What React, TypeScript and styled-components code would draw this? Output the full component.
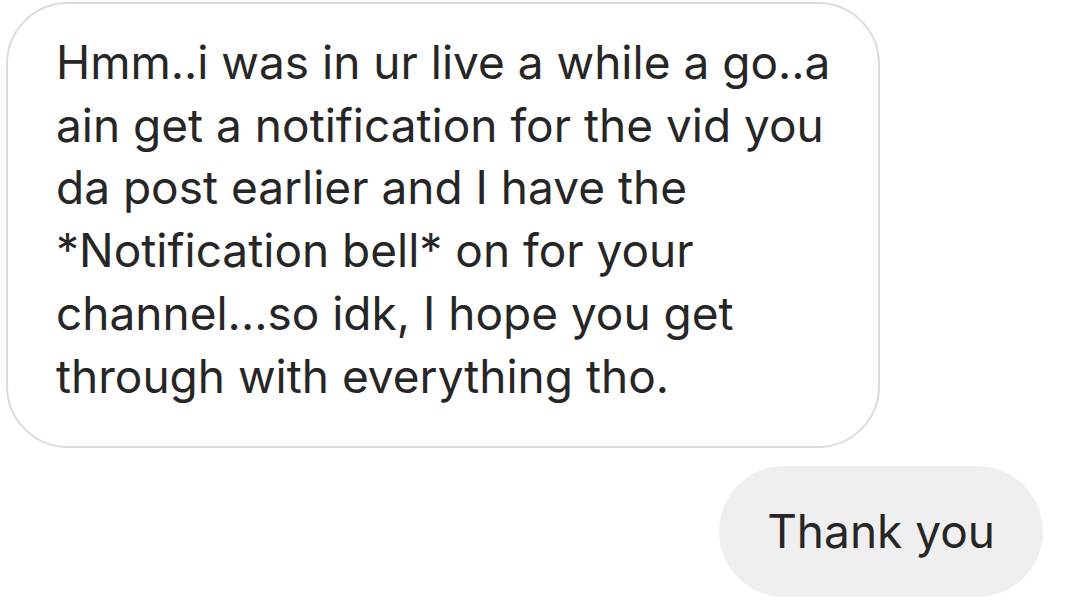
import styled, { createGlobalStyle } from "styled-components";

const GlobalStyle = createGlobalStyle`
  html, body {
    margin: 0;
    padding: 0;
    background: #ffffff;
  }
  body {
    font-family: Inter, "Liberation Sans", Arial, sans-serif;
    color: #262626;
  }
`;

const Thread = styled.div`
  display: flex;
  flex-direction: column;
  width: 1079px;
  height: 607px;
  padding: 2px 36px 0 6px;
  box-sizing: border-box;
  overflow: hidden;
`;

const Bubble = styled.div<{ $mine?: boolean }>`
  box-sizing: border-box;
  align-self: ${({ $mine }) => ($mine ? "flex-end" : "flex-start")};
  font-size: 46px;
  line-height: 62.7px;
  letter-spacing: 0;
  color: #262626;
  ${({ $mine }) =>
    $mine
      ? `
    background: #efefef;
    border-radius: 66px;
    height: 131px;
    padding: 0 48px;
    display: flex;
    align-items: center;
    margin-top: 18px;
  `
      : `
    width: 874px;
    background: #ffffff;
    border: 2px solid #dbdbdb;
    border-radius: 62px;
    padding: 27px 0 39px 48px;
  `}
`;

const Line = styled.span`
  display: block;
  white-space: nowrap;
`;

const lines = [
  "Hmm..i was in ur live a while a go..a",
  "ain get a notification for the vid you",
  "da post earlier and I have the",
  "*Notification bell* on for your",
  "channel...so idk, I hope you get",
  "through with everything tho.",
];

export default function App() {
  return (
    <>
      <GlobalStyle />
      <Thread>
        <Bubble>
          {lines.map((l) => (
            <Line key={l}>{l}</Line>
          ))}
        </Bubble>
        <Bubble $mine>Thank you</Bubble>
      </Thread>
    </>
  );
}
